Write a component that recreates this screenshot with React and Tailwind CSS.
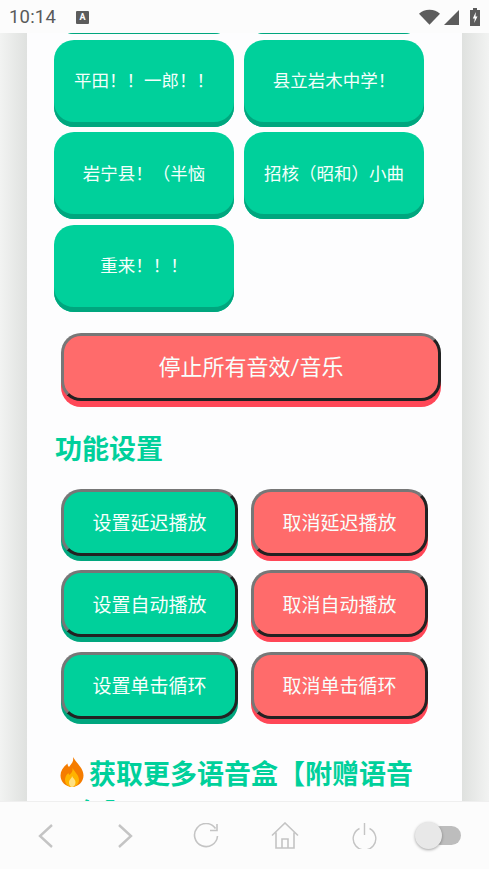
const FONT = "font-['Roboto','Noto_Sans_CJK_SC',sans-serif]";

function SoundButton({ label }) {
  return (
    <button className="h-[87px] rounded-[20px] bg-[#00d09b] shadow-[inset_0_-5px_0_#00a67e] pb-[3px] text-[17.500px] text-[#f4fffb]">
      {label}
    </button>
  );
}

function ActionButton({ label, tone, className = "" }) {
  const colours =
    tone === "green"
      ? "bg-[#00d09b] shadow-[0_5px_0_#00a67e]"
      : "bg-[#ff6b6b] shadow-[0_5px_0_#ff4757]";
  return (
    <button
      className={`${colours} border-[3px] border-t-[#777777] border-l-[#777777] border-r-[#222222] border-b-[#222222] text-[#f8fffc] ${className}`}
    >
      {label}
    </button>
  );
}

function Flame() {
  return (
    <svg width="24" height="30" viewBox="0 0 24 30" className="shrink-0 mt-[1px]">
      <path d="M13 0c1 5 -2 7 -4 10c-1 -1 -1.500 -2 -1.500 -3.500C3 10 0.500 14 0.500 18.500C0.500 25 6 30 12 30s11.500 -5 11.500 -11.500C23.500 11 17 7 13 0z" fill="#f57c00" />
      <path d="M12.500 11c0.500 4 -1.500 5 -3 7c-0.500 -0.500 -1 -1 -1 -2C6 18 5 20.500 5 23c0 4 3.500 7 7 7s7 -3 7 -7c0 -5 -4.500 -8 -6.500 -12z" fill="#ffb300" />
      <path d="M12 19c0 2.500 -3 3.500 -3 6.500c0 2.500 1.500 4.500 3 4.500s3.500 -2 3.500 -4.500c0 -3 -2.500 -4 -3.500 -6.500z" fill="#ffe082" />
    </svg>
  );
}

function StatusBar() {
  return (
    <div className="h-[33px] shrink-0 bg-[#fcfcfc] flex items-center pl-[9px] pr-[9px] pt-[1px] text-[#5a5a5a]">
      <span className="text-[18.500px] tracking-[0.2px] leading-none">10:14</span>
      <span className="ml-[20px] w-[13px] h-[13px] rounded-[1px] bg-[#5c5c5c] text-white text-[9px] font-bold leading-[12px] text-center">
        A
      </span>
      <div className="ml-auto flex items-center">
        <svg width="21" height="16" viewBox="0 0 22 16">
          <path d="M0 4.500C3 2 6.500 0.500 11 0.500S19 2 22 4.500L11 16z" fill="#5c5c5c" />
        </svg>
        <svg width="15" height="15" viewBox="0 0 15 15" className="ml-[4px]">
          <path d="M15 0V15H0z" fill="#5c5c5c" />
        </svg>
        <svg width="10" height="18" viewBox="0 0 10 18" className="ml-[11px]">
          <path d="M3 0h4v2h3v16H0V2h3z" fill="#5c5c5c" />
          <path d="M5.800 4L2.800 10.500h2L4.200 15L7.500 8.500h-2z" fill="#ffffff" />
        </svg>
      </div>
    </div>
  );
}

function BottomBar() {
  const stroke = { fill: "none", stroke: "#c4c4c4", strokeWidth: 2 };
  return (
    <div className="h-[68px] shrink-0 bg-[#fcfcfc] border-t border-[#efefef] rounded-b-[10px] flex items-center text-[#c4c4c4]">
      <svg width="16" height="24" viewBox="0 0 16 24" className="ml-[38px]">
        <path d="M14 1L2 12l12 11" {...stroke} strokeWidth="2.400" />
      </svg>
      <svg width="16" height="24" viewBox="0 0 16 24" className="ml-[63px]">
        <path d="M2 1l12 11L2 23" {...stroke} strokeWidth="2.400" />
      </svg>
      <svg width="26" height="26" viewBox="0 0 26 26" className="ml-[60px]">
        <path d="M22.500 5.500A11.500 11.500 0 1 0 24.500 13" {...stroke} strokeWidth="1.600" />
        <path d="M24 1v6.500h-7" {...stroke} strokeWidth="1.600" />
      </svg>
      <svg width="28" height="27" viewBox="0 0 28 27" className="ml-[52px]">
        <path d="M1 13.500L14 1l13 12.500M5 10.500V26h18V10.500M11 26v-9h6v9" {...stroke} strokeWidth="1.600" />
      </svg>
      <svg width="25" height="26" viewBox="0 0 25 26" className="ml-[53px]">
        <path d="M7.500 5.500a11.300 11.300 0 1 0 10 0M12.500 0v12" {...stroke} strokeWidth="1.400" />
      </svg>
      <div className="relative ml-[38px] w-[46px] h-[28px]">
        <div className="absolute left-[16px] top-[4px] w-[30px] h-[19px] rounded-full bg-[#bdbdbd]" />
        <div className="absolute left-0 top-0 w-[27px] h-[27px] rounded-full bg-[#e8e8e8] shadow-[0_1px_3px_rgba(0,0,0,0.35)]" />
      </div>
    </div>
  );
}

export default function App() {
  const sounds = ["平田！！一郎！！", "县立岩木中学！", "岩宁县！（半恼", "招核（昭和）小曲", "重来！！！"];
  const actions = [
    ["设置延迟播放", "取消延迟播放"],
    ["设置自动播放", "取消自动播放"],
    ["设置单击循环", "取消单击循环"],
  ];
  return (
    <div className={`h-[869px] w-[489px] overflow-hidden flex flex-col bg-[#fcfcfc] ${FONT}`}>
      <StatusBar />
      <div className="flex-1 min-h-0 flex overflow-hidden">
        <div className="w-[27px] shrink-0 bg-gradient-to-r from-[#f2f3f2] to-[#dfe1df]" />
        <main className="flex-1 min-w-0 bg-[#fdfdfe] overflow-hidden">
          <div className="mt-[-86px] pl-[27px]">
            <div className="grid grid-cols-[180px_180px] gap-x-[10px] gap-y-[5.500px]">
              <SoundButton label="" />
              <SoundButton label="" />
              {sounds.map((s) => (
                <SoundButton key={s} label={s} />
              ))}
            </div>
            <ActionButton
              label="停止所有音效/音乐"
              tone="red"
              className="block mt-[21px] ml-[7px] w-[380px] h-[68px] rounded-[20px] text-[22px] pt-[2px] shadow-[0_6px_0_#ff4757]"
            />
            <h2 className="mt-[32px] text-[27px] leading-[34px] font-bold text-[#00d09b] ml-[1px]">功能设置</h2>
            <div className="mt-[22px] ml-[7px] grid grid-cols-[177px_177px] gap-x-[13px] gap-y-[14.500px]">
              {actions.flat().map((a, i) => (
                <ActionButton
                  key={a}
                  label={a}
                  tone={i % 2 === 0 ? "green" : "red"}
                  className="h-[67px] rounded-[20px] text-[19px] pt-[5px]"
                />
              ))}
            </div>
            <div className="mt-[37px] ml-[6px] flex items-start gap-[5px] pr-[48px]">
              <Flame />
              <h2 className="text-[27px] leading-[39px] font-bold text-[#00d09b] whitespace-nowrap">
                获取更多语音盒【附赠语音
              </h2>
            </div>
            <div className="ml-[24px] text-[27px] leading-[39px] font-bold text-[#00d09b]">包】</div>
          </div>
        </main>
        <div className="w-[27px] shrink-0 bg-gradient-to-l from-[#f2f3f2] to-[#dfe1df]" />
      </div>
      <BottomBar />
    </div>
  );
}
